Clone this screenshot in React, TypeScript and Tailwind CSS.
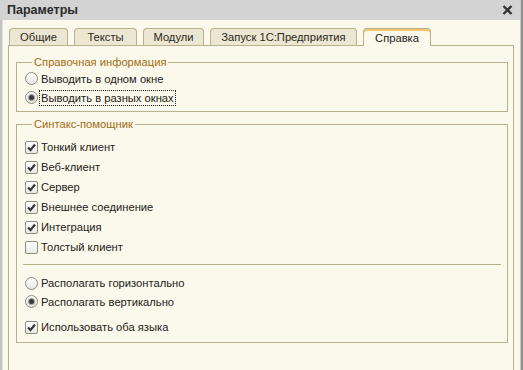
import React from "react";

const font = { fontFamily: '"Liberation Sans", Arial, sans-serif' };

function Check({ on }: { on: boolean }) {
  return (
    <span className="w-[13px] h-[13px] shrink-0 rounded-[2px] border border-[#8e8c80] bg-gradient-to-b from-white to-[#e9e8e2] flex items-center justify-center">
      {on && (
        <svg width="11" height="11" viewBox="0 0 11 11">
          <path d="M2 5.5 L4.5 8 L9 2.5" fill="none" stroke="#3a3a3a" strokeWidth="2.2" />
        </svg>
      )}
    </span>
  );
}

function Radio({ on }: { on: boolean }) {
  return (
    <span className="w-[13px] h-[13px] shrink-0 rounded-full border border-[#8e8c80] bg-gradient-to-b from-white to-[#e6e5df] flex items-center justify-center">
      {on && <span className="w-[5px] h-[5px] rounded-full bg-[#3c3c3c] shadow-[0_0_1px_1px_#9a9a9a]" />}
    </span>
  );
}

function Row({
  kind,
  on,
  label,
  focus,
  h = "h-[20px]",
}: {
  kind: "check" | "radio";
  on: boolean;
  label: string;
  focus?: boolean;
  h?: string;
}) {
  return (
    <div className={`flex items-center ${h}`}>
      {kind === "check" ? <Check on={on} /> : <Radio on={on} />}
      <span
        className={`ml-[1px] px-[1px] leading-[14px] border ${
          focus ? "border-dotted border-[#222]" : "border-transparent"
        }`}
      >
        {label}
      </span>
    </div>
  );
}

const tabs = [
  { t: "Общие", w: "w-[59px]" },
  { t: "Тексты", w: "w-[63px]" },
  { t: "Модули", w: "w-[61px]" },
  { t: "Запуск 1С:Предприятия", w: "w-[147px]" },
];

export default function App() {
  return (
    <div
      style={font}
      className="w-[523px] h-[370px] overflow-hidden flex flex-col bg-[#fbf9eb] text-[11.2px] text-[#23211a]"
    >
      <div className="h-[20px] shrink-0 flex">
        <div className="flex-1 bg-[#d3d3d3] flex items-center justify-between pl-[7px] pr-[7px]">
          <span className="font-bold text-[12.5px] text-[#2a2a2a]">Параметры</span>
          <svg width="11" height="10" viewBox="0 0 11 10">
            <path d="M1.5 1 L9.5 9 M9.5 1 L1.5 9" stroke="#333" strokeWidth="2.4" />
          </svg>
        </div>
        <div className="w-[3px] flex">
          <div className="w-px bg-[#c9c9c9]" />
          <div className="w-[2px] bg-[#8f8f8f]" />
        </div>
      </div>

      <div className="flex-1 flex">
        <div className="w-[3px] flex">
          <div className="w-[2px] bg-[#c3c3c3]" />
          <div className="w-px bg-[#dedede]" />
        </div>

        <div className="flex-1 flex flex-col pl-[5px] pr-[6px] pt-[8px]">
          <div className="flex items-end gap-[6px] pl-[1px] h-[17px]">
            {tabs.map((x) => (
              <div
                key={x.t}
                className={`${x.w} h-[17px] rounded-t-[4px] border border-b-0 border-[#b9b18c] bg-[#ece7d2] flex items-center justify-center text-[#2a261a]`}
              >
                {x.t}
              </div>
            ))}
            <div className="w-[68px] h-[18px] -mb-px relative z-10 rounded-t-[4px] border border-b-0 border-[#b9b18c] bg-[#fbf9eb] shadow-[inset_0_2px_0_#f4c56c] flex items-center justify-center pt-[1px]">
              Справка
            </div>
          </div>

          <div className="flex-1 border border-b-0 border-[#b9b18c] pl-[7px] pr-[5px] pt-[9px]">
            <fieldset className="border border-[#b9b18c] pl-[8px] pb-[4px]">
              <legend className="ml-[7px] px-[2px] leading-[14px] text-[#a36c12]">
                Справочная информация
              </legend>
              <Row kind="radio" on={false} label="Выводить в одном окне" h="h-[19px]" />
              <Row kind="radio" on={true} label="Выводить в разных окнах" focus h="h-[19px]" />
            </fieldset>

            <fieldset className="mt-[5px] border border-[#b9b18c] pl-[8px] pt-[6px] pb-[6px]">
              <legend className="ml-[7px] px-[2px] leading-[14px] text-[#a36c12]">
                Синтакс-помощник
              </legend>
              <Row kind="check" on={true} label="Тонкий клиент" />
              <Row kind="check" on={true} label="Веб-клиент" />
              <Row kind="check" on={true} label="Сервер" />
              <Row kind="check" on={true} label="Внешнее соединение" />
              <Row kind="check" on={true} label="Интеграция" />
              <Row kind="check" on={false} label="Толстый клиент" />
              <div className="mt-[7px] mr-[6px] -ml-[2px] h-px bg-[#b9b18c]" />
              <div className="mt-[9px]">
                <Row kind="radio" on={false} label="Располагать горизонтально" h="h-[18px]" />
                <Row kind="radio" on={true} label="Располагать вертикально" h="h-[19px]" />
              </div>
              <div className="mt-[7px]">
                <Row kind="check" on={true} label="Использовать оба языка" h="h-[18px]" />
              </div>
            </fieldset>
          </div>
        </div>

        <div className="w-[3px] flex">
          <div className="w-px bg-[#c9c9c9]" />
          <div className="w-[2px] bg-[#8f8f8f]" />
        </div>
      </div>
    </div>
  );
}
